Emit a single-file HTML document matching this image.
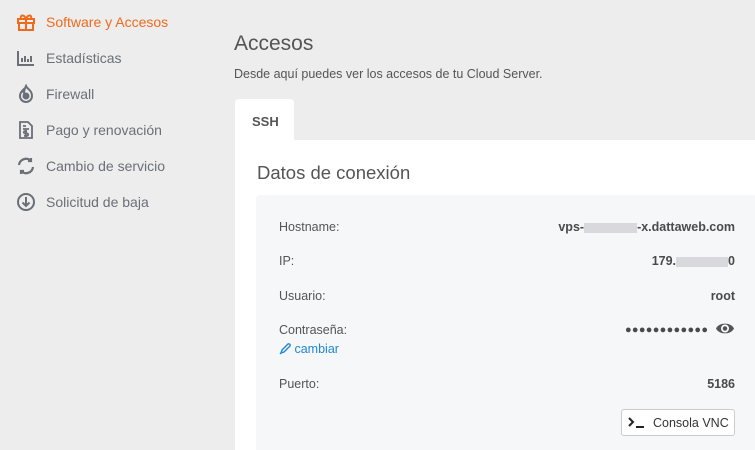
<!DOCTYPE html>
<html><head><meta charset="utf-8"><style>
*{margin:0;padding:0;box-sizing:border-box}
body{width:755px;height:450px;overflow:hidden;background:#ededed;font-family:"Liberation Sans",sans-serif;position:relative;color:#555}
.nav{position:absolute;left:16px;font-size:14px;color:#6b6f76;display:flex;align-items:center}
.nav svg{width:20px;height:20px;margin-right:10px}
.abs{position:absolute}
.lbl{position:absolute;left:279px;font-size:12.5px;color:#555}
.val{position:absolute;right:20px;font-size:12.5px;color:#4a4a4a;font-weight:bold}
.blur{display:inline-block;height:10px;background:#d9d9dd;vertical-align:middle}
</style></head><body>
<div class="nav" style="top:12px;color:#f06a1c"><svg viewBox="0 0 20 20" fill="none" stroke="#f06a1c" stroke-width="2"><rect x="2" y="7" width="16" height="4"/><path d="M3 11v7h14v-7M10 7v11M10 7C8 2 4 3 5 6M10 7c2-5 6-4 5-1"/></svg>Software y Accesos</div>
<div class="nav" style="top:48px"><svg viewBox="0 0 20 20" fill="none" stroke="#6b6f76" stroke-width="2"><path d="M2 3v14h16M6 14v-4M9 14v-6M12 14v-3M15 14v-6"/></svg>Estadísticas</div>
<div class="nav" style="top:84px"><svg viewBox="0 0 20 20" fill="none" stroke="#6b6f76" stroke-width="2"><path d="M10 2c1 3 6 4 6 10a6 6 0 0 1-12 0c0-3 2-5 3-6 0 2 1 3 1 3 0-3 1-5 2-7z"/><circle cx="10" cy="12" r="2.5" fill="#6b6f76"/></svg>Firewall</div>
<div class="nav" style="top:120px"><svg viewBox="0 0 20 20" fill="none" stroke="#6b6f76" stroke-width="1.8"><path d="M4 2h8l4 4v12H4z"/><path d="M7 6h3M7 9h6M11 11H9a1.2 1.2 0 0 0 0 2.4h2a1.2 1.2 0 0 1 0 2.4H8M10 10v7"/></svg>Pago y renovación</div>
<div class="nav" style="top:156px"><svg viewBox="0 0 20 20" fill="none" stroke="#6b6f76" stroke-width="2.2"><path d="M3 9a7 7 0 0 1 12-4M17 11a7 7 0 0 1-12 4M15 2v3h-3M5 18v-3h3"/></svg>Cambio de servicio</div>
<div class="nav" style="top:192px"><svg viewBox="0 0 20 20" fill="none" stroke="#6b6f76" stroke-width="2"><circle cx="10" cy="10" r="8"/><path d="M10 5v9M6.5 10.5 10 14l3.5-3.5"/></svg>Solicitud de baja</div>

<div class="abs" style="left:234px;top:32px;font-size:21px;color:#555">Accesos</div>
<div class="abs" style="left:234px;top:67px;font-size:12.5px;color:#555">Desde aquí puedes ver los accesos de tu Cloud Server.</div>
<div class="abs" style="left:235px;top:99px;width:59px;height:44px;background:#fff;border-radius:4px 4px 0 0"></div>
<div class="abs" style="left:252px;top:114px;font-size:13px;font-weight:bold;color:#555">SSH</div>
<div class="abs" style="left:235px;top:140px;width:520px;height:310px;background:#fff"></div>
<div class="abs" style="left:257px;top:162px;font-size:18.5px;color:#555">Datos de conexión</div>
<div class="abs" style="left:256px;top:195px;width:499px;height:255px;background:#f6f7f9;border-radius:4px 0 0 0"></div>
<div class="lbl" style="top:220px">Hostname:</div>
<div class="val" style="top:220px">vps-<span class="blur" style="width:53px"></span>-x.dattaweb.com</div>
<div class="lbl" style="top:254px">IP:</div>
<div class="val" style="top:254px">179.<span class="blur" style="width:52px"></span>0</div>
<div class="lbl" style="top:289px">Usuario:</div>
<div class="val" style="top:289px">root</div>
<div class="lbl" style="top:323px">Contraseña:</div>
<div class="val" style="top:321px;letter-spacing:0.3px;font-size:11px">●●●●●●●●●●●● &nbsp;<svg width="20" height="15" viewBox="0 0 20 15" style="vertical-align:-3px"><path d="M1 7.5C4 1 16 1 19 7.5 16 14 4 14 1 7.5z" fill="#555"/><circle cx="10" cy="7.5" r="4" fill="#fff"/><circle cx="10" cy="7.5" r="2.3" fill="#555"/></svg></div>
<div class="abs" style="left:279px;top:342px;font-size:12.5px;color:#1e88d6"><svg width="12" height="13" viewBox="0 0 12 13" style="vertical-align:-2px" fill="none" stroke="#1e88d6" stroke-width="1.4"><path d="M2 11l1-3 6-6a1.5 1.5 0 0 1 2 2l-6 6zM1 12l1-1"/></svg> cambiar</div>
<div class="lbl" style="top:377px">Puerto:</div>
<div class="val" style="top:377px">5186</div>
<div class="abs" style="left:621px;top:409px;width:114px;height:27px;border:1px solid #ccc;border-radius:3px;background:#fff;font-size:12.5px;color:#333;padding:6px 0 0 31px">Consola VNC</div>
<svg class="abs" style="left:628px;top:417px" width="18" height="11" viewBox="0 0 18 11" fill="none" stroke="#222" stroke-width="2"><path d="M1 1l4 4-4 4M8 10h8"/></svg>
</body></html>
